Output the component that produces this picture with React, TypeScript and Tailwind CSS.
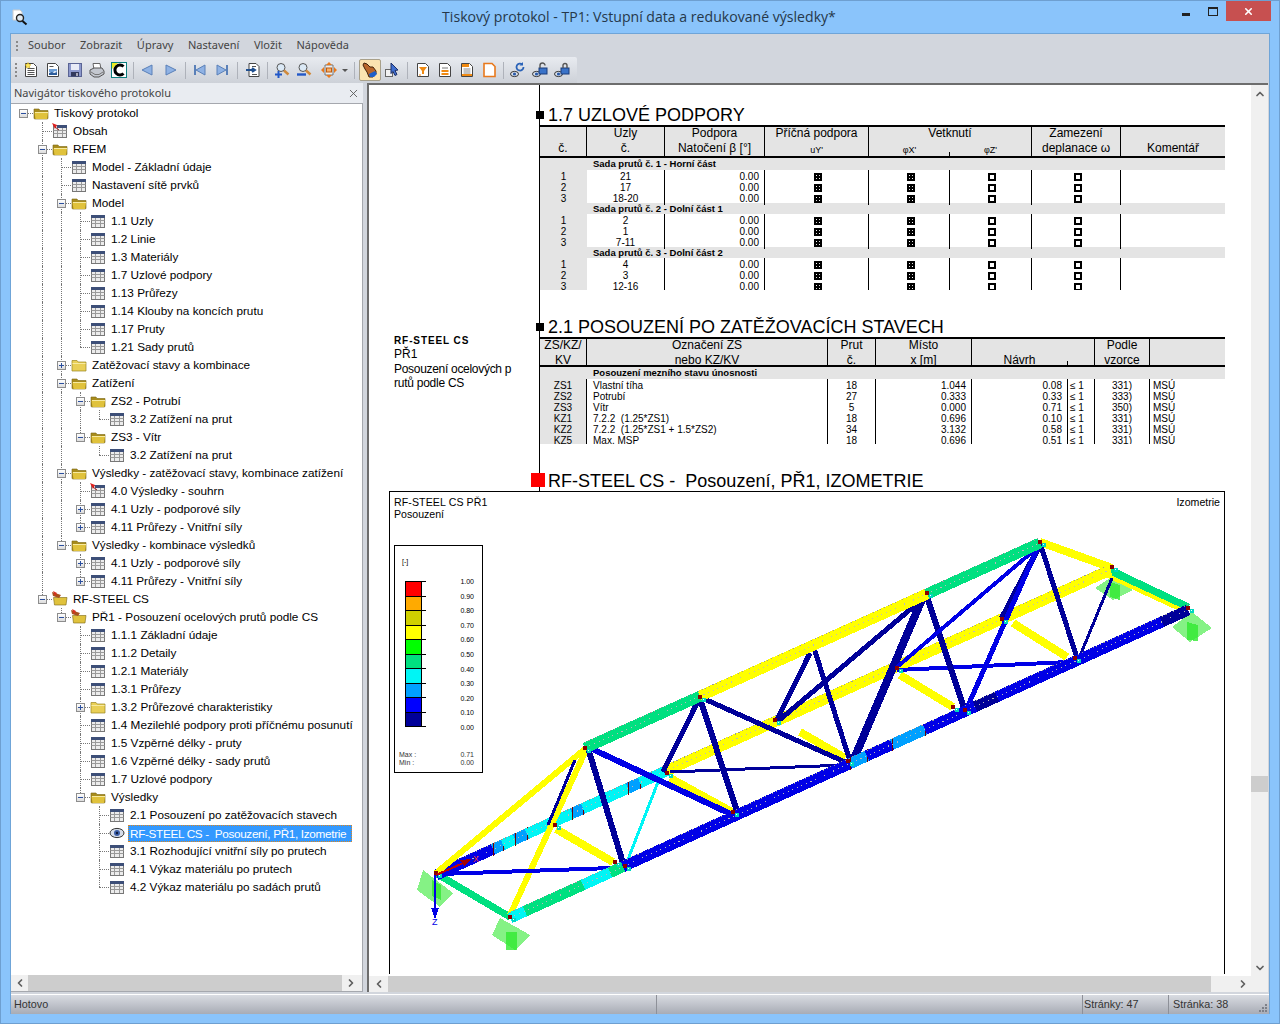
import React from "react";
import { ChevronLeft, ChevronRight, ChevronUp, ChevronDown, X } from "lucide-react";

const DocBase = () => <path d="M2.5 1.5h8l3 3v10h-11z" fill="#fff" stroke="#444" />;
const I = ({ children }: { children: React.ReactNode }) => (
  <svg width="16" height="16" viewBox="0 0 16 16" className="shrink-0">{children}</svg>
);
const Lines = ({ c = "#555" }: { c?: string }) => (
  <path d="M4.5 6.5h7M4.5 8.5h7M4.5 10.5h7M4.5 12.5h7" stroke={c} fill="none" />
);
const Eye = () => (
  <g>
    <ellipse cx="4.5" cy="12" rx="4" ry="2.6" fill="#dfe6f0" stroke="#333" />
    <circle cx="4.5" cy="12" r="1.6" fill="#2a5aa8" />
  </g>
);
const Mag = () => (
  <g>
    <circle cx="7" cy="5.5" r="4" fill="#dbe9f6" stroke="#555" />
    <path d="M10 8.5l4.5 4" stroke="#d08a3c" strokeWidth="2.4" fill="none" />
  </g>
);
const Tools: Record<string, React.ReactNode> = {
  nw: (<><DocBase /><Lines /><path d="M5 .5l1 2 2 .2-1.6 1.3.5 2.1L5 5l-1.9 1.1.5-2.1L2 2.7l2-.2z" fill="#ffe95c" stroke="#c9a200" strokeWidth=".5" /></>),
  op: (<><DocBase /><path d="M4 7h8v3l-2-1-3 2-3-1z" fill="#6e9fd6" /><path d="M4 11l3-1 2 1 3-1v3H4z" fill="#2c5d9c" /><path d="M4.5 4.5h4" stroke="#555" /></>),
  sv: (<><rect x="1.5" y="1.5" width="13" height="13" fill="#8c98cc" stroke="#5a6494" /><rect x="4" y="2" width="8" height="6" fill="#e8ebf6" /><rect x="4" y="10" width="8" height="4.5" fill="#333a5c" /><rect x="9" y="11" width="2" height="3" fill="#aab" /></>),
  pr: (<><path d="M4 1.5h7l1 6H5z" fill="#fff" stroke="#666" /><path d="M1 8l4-2h8l2 3v3l-5 3H5l-4-3z" fill="#c4c8d0" stroke="#555" /><path d="M2 10l4 2.5h4l4-2.5" stroke="#777" fill="none" /></>),
  cl: (<><rect x=".5" y=".5" width="15" height="15" fill="#fff" stroke="#0d7f7f" /><path d="M1 1h6L1 7z" fill="#ecec20" /><path d="M12.5 4.5A5 5 0 1 0 12.5 11.5" stroke="#000" strokeWidth="3" fill="none" /></>),
  al: (<path d="M2 8l10-5v10z" fill="#8fb2e4" stroke="#5a80b8" />),
  ar: (<path d="M14 8L4 3v10z" fill="#8fb2e4" stroke="#5a80b8" />),
  fs: (<><path d="M3 3v10" stroke="#5a80b8" strokeWidth="2" /><path d="M4 8l9-5v10z" fill="#8fb2e4" stroke="#5a80b8" /></>),
  ls: (<><path d="M13 3v10" stroke="#5a80b8" strokeWidth="2" /><path d="M12 8L3 3v10z" fill="#8fb2e4" stroke="#5a80b8" /></>),
  ex: (<><path d="M4 1.5h7l3 3v10H4z" fill="#fff" stroke="#444" /><path d="M7 4.5h4M7 12.5h5" stroke="#555" /><path d="M1 8h8M7 6l3 2-3 2" stroke="#1f4f8f" strokeWidth="2" fill="none" /></>),
  zi: (<><Mag /><path d="M1 12.5h7M4.5 9v7" stroke="#2258c8" strokeWidth="2" /></>),
  zo: (<><Mag /><path d="M1 12.5h9" stroke="#2258c8" strokeWidth="2.4" /></>),
  st: (<><path d="M4 3h8v10H4z" fill="#eee" stroke="#777" /><path d="M8 0l3 3H5zM8 16l3-3H5zM0 8l3-3v6zM16 8l-3-3v6z" fill="#e8791c" /><rect x="5.5" y="6" width="5" height="4" fill="#f6b26b" stroke="#c05a10" /></>),
  hd: (<><path d="M2 1l3 1 3 3 3 0 3 4v3l-3 3H7L5 10 3 7 1 3z" fill="#b9662b" stroke="#442208" /><path d="M7 12l6-3 2 3-3 3H8z" fill="#1e5fc8" /></>),
  cs: (<><rect x="1.5" y="7.5" width="7" height="7" fill="#f2f2f2" stroke="#666" /><path d="M7 1l7 7-3 .5 2 4-2 1-2-4-2 2z" fill="#3f6fd0" stroke="#1d2f66" /></>),
  ff: (<><DocBase /><path d="M4 5h8L9 9v3H7V9z" fill="#f08a12" /><path d="M4 13h2" stroke="#f08a12" /></>),
  fl: (<><DocBase /><path d="M5 6h6" stroke="#777" /><rect x="4.5" y="8" width="7" height="2" fill="#f08a12" /><rect x="4.5" y="11" width="7" height="2" fill="#f08a12" /></>),
  fh: (<><DocBase /><rect x="3" y="2" width="7" height="3" fill="#f08a12" /><path d="M4.5 7h7M4.5 9h7M4.5 11h7" stroke="#888" /><rect x="3" y="12" width="10" height="2" fill="#f08a12" /></>),
  fo: (<path d="M3 1.5h8l3 3v10H3z" fill="#fff" stroke="#e8791c" strokeWidth="1.6" />),
  es: (<><Eye /><path d="M13.5 5a3.5 3.5 0 1 1-1.2-2.6" stroke="#2a63b8" strokeWidth="1.8" fill="none" /><path d="M13 0v3.5H9.5" fill="#2a63b8" /></>),
  eu: (<><Eye /><rect x="7" y="6" width="8" height="6" fill="#3a73c8" stroke="#1b3d7a" /><path d="M8 6V3.5a2.5 2.5 0 0 1 5 0" stroke="#555" strokeWidth="1.4" fill="none" /></>),
  el: (<><Eye /><rect x="7" y="6" width="8" height="6" fill="#3a73c8" stroke="#1b3d7a" /><path d="M9 6V3.5a2 2 0 0 1 4 0V6" stroke="#555" strokeWidth="1.4" fill="none" /></>),
};

const T = ({ n }: { n: string }) => (
  <div className="flex h-[22px] w-[22px] items-center justify-center">
    <I>{Tools[n]}</I>
  </div>
);
const Sep = ({ w }: { w: string }) => (
  <div className={`flex justify-center ${w}`}>
    <div className="h-[17px] w-px bg-[#aeb2ba]" />
  </div>
);

const TableIcon = () => (
  <I>
    <rect x="1.5" y="2.5" width="13" height="12" fill="#ececec" stroke="#777" />
    <rect x="1" y="2" width="14" height="3" fill="#3d4f78" />
    <path d="M1.5 7.5h13M1.5 10.5h13M5.5 5v9M10.5 5v9" stroke="#9a9a9a" />
  </I>
);
const PinIcon = () => (
  <I>
    <rect x="1.5" y="2.5" width="13" height="12" fill="#ececec" stroke="#777" />
    <rect x="5" y="2" width="10" height="3" fill="#3d4f78" />
    <path d="M1.5 7.5h13M1.5 10.5h13M5.5 5v9M10.5 5v9" stroke="#9a9a9a" />
    <path d="M0 0l5 2-2 4z" fill="#e02020" />
    <path d="M3 4l4 3" stroke="#a02020" />
  </I>
);
const FolderIcon = () => (
  <I>
    <path d="M1 4h5l1 1.5h8V13a1 1 0 0 1-1 1H2a1 1 0 0 1-1-1z" fill="#a88c1c" stroke="#7a6714" strokeWidth=".6" />
    <path d="M1.5 7.5h13.5l-1 6.5H2.5z" fill="#e0c23c" />
    <path d="M2 7.5h13" stroke="#f7eaa0" />
  </I>
);
const ClosedFolderIcon = () => (
  <I>
    <path d="M1 3.5h5l1.2 1.5H15v9H1z" fill="#e9cf56" stroke="#9a8420" strokeWidth=".7" />
    <path d="M1.5 6.5h13" stroke="#f7eaa0" />
  </I>
);
const SteelIcon = () => (
  <I>
    <path d="M1.5 6.5h13.5l-1 7.5H2.5z" fill="#e0c23c" stroke="#7a6714" strokeWidth=".6" />
    <path d="M0 1l9 3-2 3L1 5z" fill="#a8501c" />
    <path d="M1 0l4 2-2 3z" fill="#d83020" />
  </I>
);
const EyeIcon = () => (
  <I>
    <ellipse cx="8" cy="8" rx="7" ry="4.6" fill="#d5dce8" stroke="#333" />
    <circle cx="8" cy="8" r="3" fill="#3d5fa8" />
    <circle cx="8" cy="8" r="1.2" fill="#0c1a3a" />
  </I>
);
const icons: Record<string, React.ReactNode> = {
  t: <TableIcon />, p: <PinIcon />, f: <FolderIcon />, c: <ClosedFolderIcon />, s: <SteelIcon />, e: <EyeIcon />,
};

type N = { l: string; i: string; k?: N[]; closed?: boolean; sel?: boolean };
const t = (l: string): N => ({ l, i: "t" });
const tree: N = {
  l: "Tiskový protokol", i: "f", k: [
    { l: "Obsah", i: "p" },
    { l: "RFEM", i: "f", k: [
      t("Model - Základní údaje"),
      t("Nastavení sítě prvků"),
      { l: "Model", i: "f", k: [
        t("1.1 Uzly"), t("1.2 Linie"), t("1.3 Materiály"), t("1.7 Uzlové podpory"), t("1.13 Průřezy"),
        t("1.14 Klouby na koncích prutu"), t("1.17 Pruty"), t("1.21 Sady prutů"),
      ] },
      { l: "Zatěžovací stavy a kombinace", i: "c", closed: true, k: [] },
      { l: "Zatížení", i: "f", k: [
        { l: "ZS2 - Potrubí", i: "f", k: [t("3.2 Zatížení na prut")] },
        { l: "ZS3 - Vítr", i: "f", k: [t("3.2 Zatížení na prut")] },
      ] },
      { l: "Výsledky - zatěžovací stavy, kombinace zatížení", i: "f", k: [
        { l: "4.0 Výsledky - souhrn", i: "p" },
        { l: "4.1 Uzly - podporové síly", i: "t", closed: true, k: [] },
        { l: "4.11 Průřezy - Vnitřní síly", i: "t", closed: true, k: [] },
      ] },
      { l: "Výsledky - kombinace výsledků", i: "f", k: [
        { l: "4.1 Uzly - podporové síly", i: "t", closed: true, k: [] },
        { l: "4.11 Průřezy - Vnitřní síly", i: "t", closed: true, k: [] },
      ] },
    ] },
    { l: "RF-STEEL CS", i: "s", k: [
      { l: "PŘ1 - Posouzení ocelových prutů podle CS", i: "s", k: [
        t("1.1.1 Základní údaje"), t("1.1.2 Detaily"), t("1.2.1 Materiály"), t("1.3.1 Průřezy"),
        { l: "1.3.2 Průřezové charakteristiky", i: "c", closed: true, k: [] },
        t("1.4 Mezilehlé podpory proti příčnému posunutí"), t("1.5 Vzpěrné délky - pruty"),
        t("1.6 Vzpěrné délky - sady prutů"), t("1.7 Uzlové podpory"),
        { l: "Výsledky", i: "f", k: [
          t("2.1 Posouzení po zatěžovacích stavech"),
          { l: "RF-STEEL CS -  Posouzení, PŘ1, Izometrie", i: "e", sel: true },
          t("3.1 Rozhodující vnitřní síly po prutech"),
          t("4.1 Výkaz materiálu po prutech"),
          t("4.2 Výkaz materiálu po sadách prutů"),
        ] },
      ] },
    ] },
  ],
};

type Row = { n: N; guides: boolean[]; last: boolean; root: boolean };
const rows: Row[] = [];
const walk = (n: N, guides: boolean[], last: boolean, root: boolean) => {
  rows.push({ n, guides, last, root });
  (n.closed ? [] : n.k ?? []).forEach((c, i, a) => walk(c, [...guides, !last], i === a.length - 1, false));
};
walk(tree, [], true, true);

const TreeRow = ({ r }: { r: Row }) => (
  <div className="flex h-[18px] items-center">
    {r.guides.map((g, i) => (
      <div key={i} className="relative h-full w-[19px] shrink-0">
        {g && <div className="absolute bottom-0 left-[9px] top-0 border-l border-dotted border-[#777]" />}
      </div>
    ))}
    <div className="relative h-full w-[19px] shrink-0">
      {!r.root && <div className={`absolute left-[9px] top-0 border-l border-dotted border-[#777] ${r.last ? "h-[9px]" : "h-[18px]"}`} />}
      <div className="absolute left-[9px] top-[9px] w-[10px] border-t border-dotted border-[#777]" />
      {r.n.k && (
        <div className="absolute left-[5px] top-[5px] flex h-[9px] w-[9px] items-center justify-center border border-[#8d8d8d] bg-gradient-to-b from-white to-[#dcdcdc]">
          <div className="h-px w-[5px] bg-[#2b4f9e]" />
          {r.n.closed && <div className="absolute h-[5px] w-px bg-[#2b4f9e]" />}
        </div>
      )}
    </div>
    {icons[r.n.i]}
    {r.n.sel ? (
      <span className="ml-[3px] whitespace-pre border border-dotted border-[#e0861c] bg-[#3399ff] pl-[1px] pr-[5px] leading-[15px] tracking-[-0.33px] text-white">{r.n.l}</span>
    ) : (
      <span className="ml-[5px] whitespace-pre text-black">{r.n.l}</span>
    )}
  </div>
);

const Check = ({ on }: { on: boolean }) =>
  on ? (
    <svg width="8" height="8" viewBox="0 0 8 8" className="block" shapeRendering="crispEdges">
      <rect width="8" height="8" fill="#000" />
      <rect x="2" y="2" width="1" height="1" fill="#fff" />
      <rect x="5" y="2" width="1" height="1" fill="#ddd" />
      <rect x="2" y="5" width="1" height="1" fill="#ddd" />
      <rect x="5" y="5" width="1" height="1" fill="#fff" />
    </svg>
  ) : (
    <div className="h-[8px] w-[8px] border-2 border-black bg-white" />
  );

const Sec = ({ children, red }: { children: React.ReactNode; red?: boolean }) => (
  <div className="relative h-[20px] whitespace-pre pl-[8px] text-[18px] leading-[20px] text-black">
    {red ? (
      <div className="absolute left-[-9px] top-[2px] h-[14px] w-[14px] bg-[#ff0000]" />
    ) : (
      <div className="absolute left-[-4px] top-[6px] h-[8px] w-[8px] bg-black" />
    )}
    {children}
  </div>
);

const g1 = "grid grid-cols-[47px_78px_100px_104px_81px_82px_89px_104px]";
const g2 = "grid grid-cols-[47px_241px_48px_96px_95px_28px_55px_75px]";

const H = ({ a, b, last, sub, s }: { a?: string; b?: React.ReactNode; last?: boolean; sub?: boolean; s?: boolean }) => (
  <div className={`flex flex-col items-center text-[12px] ${s ? "h-[26px]" : "h-[29px]"} ${last ? "" : "border-r border-black"}`}>
    <div className="h-[13px] whitespace-pre leading-[12px]">{a}</div>
    <div className={`h-[13px] whitespace-pre leading-[17px] ${sub ? "pt-[2px] text-[9px]" : ""}`}>{b}</div>
  </div>
);

const Band = ({ g, text, h }: { g: string; text: string; h: string }) => (
  <div className={`${g} ${h} bg-[#e4e4e4] text-[9.5px] font-bold leading-[11px]`}>
    <div />
    <div className="col-span-7 whitespace-pre pl-[6px]">{text}</div>
  </div>
);

const Rows1 = ({ data }: { data: [string, string][] }) => (
  <>
    {data.map(([a, b], i) => (
      <div key={i} className={`${g1} h-[11px] text-[10px] leading-[13px]`}>
        <div className="bg-[#e4e4e4] text-center">{a}</div>
        <div className="border-r border-black text-center">{b}</div>
        <div className="border-r border-black pr-[5px] text-right">0.00</div>
        {[true, true, false, false].map((on, k) => (
          <div key={k} className="flex items-center justify-center border-r border-black pl-[3px]">
            <Check on={on} />
          </div>
        ))}
        <div />
      </div>
    ))}
  </>
);

const rows2: string[][] = [
  ["ZS1", "Vlastní tíha", "18", "1.044", "0.08", "331)"],
  ["ZS2", "Potrubí", "27", "0.333", "0.33", "333)"],
  ["ZS3", "Vítr", "5", "0.000", "0.71", "350)"],
  ["KZ1", "7.2.2  (1.25*ZS1)", "18", "0.696", "0.10", "331)"],
  ["KZ2", "7.2.2  (1.25*ZS1 + 1.5*ZS2)", "34", "3.132", "0.58", "331)"],
  ["KZ5", "Max. MSP", "18", "0.696", "0.51", "331)"],
];

const Seg = ({ a, b, c, w }: { a: number[]; b: number[]; c: string; w: number }) => (
  <line x1={a[0]} y1={a[1]} x2={b[0]} y2={b[1]} stroke={c} strokeWidth={w} />
);
const navy = "#000099", blue = "#0000e6", yel = "#ffff00", grn = "#00e080", cy = "#00f5f5", lb = "#00a0ff";

const Chord = ({ x0, y0, x1, y1, w, stops }: { x0: number; y0: number; x1: number; y1: number; w: number; stops: [number, string][] }) => {
  const yAt = (x: number) => y0 + ((y1 - y0) * (x - x0)) / (x1 - x0);
  let prev = x0;
  return (
    <g>
      {stops.map(([x, c], i) => {
        const s = prev;
        prev = x;
        return (
          <g key={i}>
            <line x1={s} y1={yAt(s)} x2={x} y2={yAt(x)} stroke={c} strokeWidth={w} />
            {c === lb && <line x1={x} y1={yAt(x) - w / 2 - 1} x2={x} y2={yAt(x) + w / 2 + 1} stroke="#700000" strokeWidth="1" />}
            {c === lb && <line x1={s} y1={yAt(s) - w / 2 - 1} x2={s} y2={yAt(s) + w / 2 + 1} stroke="#700000" strokeWidth="1" />}
          </g>
        );
      })}
      <line x1={x0} y1={yAt(x0) - w / 2} x2={x1} y2={yAt(x1) - w / 2} stroke="#999" strokeWidth="1" strokeDasharray="1 3" />
      <line x1={x0} y1={yAt(x0)} x2={x1} y2={yAt(x1)} stroke="#bbb" strokeWidth="1" strokeDasharray="1 4" />
    </g>
  );
};
const Node = ({ x, y }: { x: number; y: number }) => (
  <g>
    <rect x={x + 2} y={y + 1} width="4" height="4" fill="#00d8c0" />
    <rect x={x + 3} y={y + 2} width="1" height="1" fill="#fff" />
    <rect x={x - 2} y={y - 2} width="4" height="4" fill="#8b0000" />
  </g>
);
const Support = ({ p, q }: { p: string; q: string }) => (
  <g>
    <polygon points={p} fill="#70f070" opacity=".85" />
    <polygon points={q} fill="#30e830" opacity=".8" />
  </g>
);

const Truss = () => (
  <svg width="834" height="483" viewBox="390 492 834 483" className="absolute left-0 top-0" shapeRendering="crispEdges">
    <Support p="423,870 453,893 440,907 417,890" q="432,880 441,885 441,900 432,896" />
    <Support p="500,918 530,935 515,950 492,935" q="506,932 517,932 517,950 506,950" />
    <Support p="1192,612 1212,628 1190,642 1172,627" q="1187,622 1198,625 1198,641 1187,640" />
    <Support p="1110,578 1133,590 1113,600 1095,588" q="1110,582 1120,585 1120,600 1110,597" />

    <Seg a={[437, 874]} b={[510, 917]} c={grn} w={7} />
    <Seg a={[1108, 570]} b={[1188, 608]} c={grn} w={9} />
    <Seg a={[1106, 575]} b={[1188, 613]} c={yel} w={4} />
    <Seg a={[1040, 542]} b={[1112, 568]} c={yel} w={8} />
    <Chord x0={436} y0={875} x1={1110} y1={570} w={11} stops={[[493, blue], [503, lb], [515, cy], [527, lb], [572, cy], [583, lb], [628, cy], [640, lb], [667, cy], [1110, yel]]} />
    <Seg a={[556, 829]} b={[613, 862]} c={yel} w={8} />
    <Seg a={[670, 778]} b={[732, 812]} c={yel} w={8} />
    <Seg a={[800, 732]} b={[845, 758]} c={yel} w={8} />
    <Seg a={[900, 675]} b={[953, 707]} c={yel} w={8} />
    <Seg a={[1013, 623]} b={[1067, 657]} c={yel} w={8} />
    <Seg a={[436, 873]} b={[585, 749]} c={yel} w={6} />
    <Seg a={[510, 915]} b={[586, 750]} c={yel} w={6} />
    <Seg a={[658, 782]} b={[627, 862]} c={cy} w={3} />
    <Seg a={[575, 760]} b={[548, 825]} c={navy} w={3} />
    <Seg a={[588, 748]} b={[623, 863]} c={navy} w={6} />
    <Seg a={[440, 874]} b={[612, 868]} c={blue} w={4} />
    <Seg a={[670, 772]} b={[845, 765]} c={navy} w={3} />
    <Seg a={[897, 670]} b={[1069, 662]} c={blue} w={4} />
    <Seg a={[588, 747]} b={[735, 816]} c={blue} w={6} />
    <Seg a={[700, 697]} b={[845, 762]} c={navy} w={5} />
    <Seg a={[697, 703]} b={[663, 772]} c={navy} w={5} />
    <Seg a={[700, 699]} b={[738, 814]} c={navy} w={6} />
    <Seg a={[813, 645]} b={[850, 761]} c={navy} w={5} />
    <Seg a={[810, 653]} b={[777, 720]} c={navy} w={5} />
    <Seg a={[919, 602]} b={[777, 722]} c={navy} w={5} />
    <Seg a={[923, 597]} b={[853, 761]} c={navy} w={8} />
    <Seg a={[927, 597]} b={[964, 708]} c={navy} w={6} />
    <Seg a={[1038, 547]} b={[897, 667]} c={blue} w={4} />
    <Seg a={[1040, 545]} b={[1002, 618]} c={navy} w={6} />
    <Seg a={[1038, 547]} b={[967, 708]} c={blue} w={5} />
    <Seg a={[1040, 543]} b={[1077, 658]} c={navy} w={5} />
    <Seg a={[1112, 578]} b={[1080, 656]} c={navy} w={3} />

    <Chord x0={510} y0={918} x1={1188} y1={610} w={11} stops={[[525, cy], [583, grn], [610, cy], [623, grn], [850, blue], [867, lb], [892, blue], [925, lb], [975, blue], [997, navy], [1162, blue], [1188, navy]]} />
    <Chord x0={585} y0={748} x1={1040} y1={543} w={11} stops={[[700, grn], [927, yel], [1040, grn]]} />

    <Node x={436} y={873} /><Node x={510} y={917} /><Node x={585} y={748} /><Node x={700} y={697} />
    <Node x={927} y={593} /><Node x={1040} y={542} /><Node x={667} y={773} /><Node x={775} y={720} />
    <Node x={897} y={668} /><Node x={1002} y={619} /><Node x={1112} y={567} /><Node x={1188} y={608} />
    <Node x={555} y={825} /><Node x={615} y={862} /><Node x={625} y={866} /><Node x={733} y={812} />
    <Node x={848} y={761} /><Node x={953} y={707} /><Node x={965} y={710} /><Node x={1075} y={658} />

    <Seg a={[435, 875]} b={[435, 912]} c={blue} w={2} />
    <polygon points="431,908 439,908 435,919" fill="#0000e6" />
    <text x="432" y="925" fontSize="9" fill="#0000e6">Z</text>
    <Seg a={[436, 875]} b={[468, 861]} c="#c00000" w={2} />
    <polygon points="460,860 471,859 464,866" fill="#a00000" />
    <text x="473" y="862" fontSize="9" fill="#e03030">X</text>
  </svg>
);

const legend = ["#ff0000", "#ffaa00", "#d0d000", "#ffff00", "#00ff00", "#00e080", "#00f5f5", "#00a0ff", "#0000ff", "#000099"];
const values = ["1.00", "0.90", "0.80", "0.70", "0.60", "0.50", "0.40", "0.30", "0.20", "0.10", "0.00"];

const ui = "font-['Liberation_Sans',sans-serif]";

export default function App() {
  return (
    <div className={`flex h-[1024px] w-[1280px] flex-col overflow-hidden border border-[#6e9fd0] bg-[#8ac4fb] ${ui} text-[12px]`}>
      <div className="relative flex h-[32px] items-center justify-center font-['Open_Sans',sans-serif] text-[14.1px] text-[#26384a]">
        <div className="absolute left-[9px] top-[8px]">
          <svg width="20" height="17" viewBox="0 0 20 17">
            <path d="M3 1h7l2 2v8H3z" fill="#fff" stroke="#ccc" />
            <circle cx="10" cy="9" r="3.5" fill="#dfe9f2" stroke="#222" strokeWidth="1.4" />
            <path d="M12.5 12l4 3.5" stroke="#111" strokeWidth="2" />
          </svg>
        </div>
        <span className="pr-[2px]">Tiskový protokol - TP1: Vstupní data a redukované výsledky*</span>
        <div className="absolute left-[1181px] top-[12px] h-[3px] w-[8px] bg-[#222]" />
        <div className="absolute left-[1207px] top-[6px] h-[9px] w-[10px] border border-t-2 border-[#222]" />
        <div className="absolute left-[1225px] top-0 flex h-[20px] w-[45px] items-center justify-center bg-[#c75050] text-white">
          <X size={11} strokeWidth={3.5} />
        </div>
      </div>

      <div className="mx-[9px] flex min-h-0 flex-1 flex-col border border-b-0 border-[#6fa5d8] bg-[#d2d6dd]">
        <div className="flex h-[23px] items-center font-['Noto_Sans',sans-serif] text-[11px] text-[#444]">
          <div className="ml-[5px] mr-[10px] h-[10px] border-l-2 border-dotted border-[#8a8a8a]" />
          <div className="flex gap-[14.6px]">
            {["Soubor", "Zobrazit", "Úpravy", "Nastavení", "Vložit", "Nápověda"].map((m) => (
              <span key={m}>{m}</span>
            ))}
          </div>
        </div>

        <div className="flex h-[26px]">
          <div className="flex w-[566px] items-center rounded-tr-[2px] bg-gradient-to-b from-[#e8ebf0] to-[#cdd1d8]">
            <div className="flex w-[9px] justify-center"><div className="h-[14px] border-l-2 border-dotted border-[#8a8a8a]" /></div>
            <T n="nw" /><T n="op" /><T n="sv" /><T n="pr" /><T n="cl" />
            <Sep w="w-[7px]" />
            <T n="al" /><T n="ar" />
            <Sep w="w-[8px]" />
            <T n="fs" /><T n="ls" />
            <Sep w="w-[9px]" />
            <T n="ex" />
            <Sep w="w-[7px]" />
            <T n="zi" /><T n="zo" />
            <div className="w-[3px]" />
            <T n="st" />
            <div className="flex w-[10px] justify-center">
              <div className="h-0 w-0 border-x-[3px] border-t-[3px] border-x-transparent border-t-[#555]" />
            </div>
            <Sep w="w-[9px]" />
            <div className="flex h-[22px] w-[22px] items-center justify-center rounded-[2px] border border-[#a8a08a] bg-[#fbe3b0]">
              <I>{Tools.hd}</I>
            </div>
            <T n="cs" />
            <Sep w="w-[9px]" />
            <T n="ff" /><T n="fl" /><T n="fh" /><T n="fo" />
            <Sep w="w-[7px]" />
            <T n="es" /><T n="eu" /><T n="el" />
          </div>
        </div>

        <div className="flex min-h-0 flex-1 pb-[2px]">
          <div className="flex w-[352px] flex-col">
            <div className="flex h-[20px] items-center justify-between bg-[#e9ecf1] pl-[3px] pr-[3px] font-['Noto_Sans',sans-serif] text-[11px] text-[#444]">
              <span>Navigátor tiskového protokolu</span>
              <X size={13} strokeWidth={1.6} className="text-[#555]" />
            </div>
            <div className="flex min-h-0 flex-1 flex-col border-y border-r border-[#a5a8ae] bg-white">
              <div className="min-h-0 flex-1 overflow-hidden pl-[3px] text-[11.75px]">
                {rows.map((r, i) => <TreeRow key={i} r={r} />)}
              </div>
              <div className="flex h-[16px] items-center bg-[#f0f0f0] text-[#606060]">
                <div className="flex w-[17px] justify-center"><ChevronLeft size={12} strokeWidth={3.5} /></div>
                <div className="h-full w-[314px] bg-[#cdcdcd]" />
                <div className="flex w-[17px] justify-center"><ChevronRight size={12} strokeWidth={3.5} /></div>
              </div>
            </div>
          </div>

          <div className="ml-[4px] mr-[1px] flex min-w-0 flex-1 flex-col border-l-2 border-t-2 border-[#6d6d6d]">
            <div className="flex min-h-0 flex-1">
              <div className="min-w-0 flex-1 overflow-hidden bg-white text-black">
                <div className="flex">
                  <div className="w-[170px] shrink-0 whitespace-pre pl-[25px] pt-[248px] text-[12px] leading-[14.5px]">
                    <div className="mt-[1px] h-[13px] text-[10px] font-bold tracking-[0.9px]">RF-STEEL CS</div>
                    <div>PŘ1</div>
                    <div className="tracking-[-0.3px]">Posouzení ocelových p</div>
                    <div className="tracking-[-0.25px]">rutů podle CS</div>
                  </div>
                  <div className="w-[686px] border-l border-black pt-[20px]">
                    <Sec>1.7 UZLOVÉ PODPORY</Sec>
                    <div className="h-[165px] overflow-hidden">
                      <div className={`${g1} border-y-2 border-black bg-[#e4e4e4]`}>
                        <H b="č." />
                        <H a="Uzly" b="č." />
                        <H a="Podpora" b="Natočení β [°]" />
                        <H a="Příčná podpora" b="uY'" sub />
                        <div className="col-span-2 flex h-[29px] flex-col border-r border-black text-[12px]">
                          <div className="h-[13px] text-center leading-[12px]">Vetknutí</div>
                          <div className="grid h-[16px] grid-cols-2 pt-[2px] text-center text-[9px] leading-[16px]">
                            <div className="relative">φX'<div className="absolute bottom-0 right-0 h-[6px] w-px bg-black" /></div>
                            <div>φZ'</div>
                          </div>
                        </div>
                        <H a="Zamezení" b="deplanace ω" />
                        <H b="Komentář" last />
                      </div>
                      <Band g={g1} text="Sada prutů č. 1 - Horní část" h="h-[12px]" />
                      <Rows1 data={[["1", "21"], ["2", "17"], ["3", "18-20"]]} />
                      <Band g={g1} text="Sada prutů č. 2 - Dolní část 1" h="h-[11px]" />
                      <Rows1 data={[["1", "2"], ["2", "1"], ["3", "7-11"]]} />
                      <Band g={g1} text="Sada prutů č. 3 - Dolní část 2" h="h-[11px]" />
                      <Rows1 data={[["1", "4"], ["2", "3"], ["3", "12-16"]]} />
                    </div>
                    <div className="h-[27px]" />
                    <Sec>2.1 POSOUZENÍ PO ZATĚŽOVACÍCH STAVECH</Sec>
                    <div className="h-[107px] overflow-hidden">
                      <div className={`${g2} border-y-2 border-black bg-[#e4e4e4]`}>
                        <H s a="ZS/KZ/" b="KV" />
                        <H s a="Označení ZS" b="nebo KZ/KV" />
                        <H s a="Prut" b="č." />
                        <H s a="Místo" b="x [m]" />
                        <div className="relative col-span-2 h-[26px] border-r border-black text-[12px] leading-[16px]">
                          <div className="w-[95px] pt-[13px] text-center">Návrh</div>
                          <div className="absolute bottom-0 left-[95px] h-[4px] w-px bg-black" />
                        </div>
                        <H s a="Podle" b="vzorce" />
                        <H s last />
                      </div>
                      <Band g={g2} text="Posouzení mezního stavu únosnosti" h="h-[12px]" />
                      {rows2.map((r) => (
                        <div key={r[0]} className={`${g2} h-[11px] text-[10px] leading-[13px]`}>
                          <div className="border-r border-black bg-[#e4e4e4] text-center">{r[0]}</div>
                          <div className="whitespace-pre border-r border-black pl-[6px]">{r[1]}</div>
                          <div className="border-r border-black text-center">{r[2]}</div>
                          <div className="border-r border-black pr-[5px] text-right">{r[3]}</div>
                          <div className="pr-[5px] text-right">{r[4]}</div>
                          <div className="whitespace-pre border-x border-black pl-[2px]">≤ 1</div>
                          <div className="border-r border-black text-center">{r[5]}</div>
                          <div className="pl-[3px]">MSÚ</div>
                        </div>
                      ))}
                    </div>
                    <div className="h-[27px]" />
                    <Sec red>RF-STEEL CS -  Posouzení, PŘ1, IZOMETRIE</Sec>
                  </div>
                </div>
                <div className="relative ml-[20px] h-[483px] w-[836px] border-x border-t border-black">
                  <div className="flex justify-between px-[4px] pt-[4px] text-[10.6px] leading-[12px]">
                    <div>
                      <div className="tracking-[0.1px]">RF-STEEL CS PŘ1</div>
                      <div>Posouzení</div>
                    </div>
                    <div>Izometrie</div>
                  </div>
                  <Truss />
                  <div className="absolute left-[4px] top-[53px] flex h-[228px] w-[89px] flex-col border border-black bg-white pl-[10px] pr-[8px] pt-[11px] text-[7px] leading-[9px]">
                    <div className="-ml-[3px] h-[24px]">[-]</div>
                    <div className="flex h-[148px]">
                      <div className="flex h-[146px] w-[17px] flex-col border-x border-b border-black">
                        {legend.map((c) => (
                          <div key={c} className="flex-1 border-t border-black" style={{ backgroundColor: c }} />
                        ))}
                      </div>
                      <div className="flex h-[146px] w-[4px] flex-col justify-between">
                        {values.map((v) => <div key={v} className="h-px bg-black" />)}
                      </div>
                      <div className="-my-[4px] flex h-[155px] flex-1 flex-col items-end justify-between">
                        {values.map((v) => <div key={v}>{v}</div>)}
                      </div>
                    </div>
                    <div className="-ml-[6px] mt-[22px] flex justify-between leading-[8px] text-[#333]">
                      <div>Max :<br />Min :</div>
                      <div>0.71<br />0.00</div>
                    </div>
                  </div>
                </div>
              </div>
              <div className="flex w-[17px] flex-col items-center bg-[#f0f0f0] text-[#606060]">
                <div className="flex h-[17px] items-center"><ChevronUp size={12} strokeWidth={3.5} /></div>
                <div className="mt-[674px] h-[16px] w-full bg-[#cdcdcd]" />
                <div className="flex-1" />
                <div className="flex h-[17px] items-center"><ChevronDown size={12} strokeWidth={3.5} /></div>
              </div>
            </div>
            <div className="flex h-[16px] items-center bg-[#f0f0f0] text-[#606060]">
              <div className="flex w-[19px] justify-center"><ChevronLeft size={12} strokeWidth={3.5} /></div>
              <div className="h-full w-[823px] bg-[#cdcdcd]" />
              <div className="flex w-[40px] justify-end pr-[2px]"><ChevronRight size={12} strokeWidth={3.5} /></div>
            </div>
          </div>
        </div>

        <div className="relative flex h-[20px] items-center border-t border-white bg-gradient-to-b from-[#d9dce2] to-[#a8acb5] text-[10.8px] text-[#333]">
          <div className="w-[645px] pl-[3px]">Hotovo</div>
          <div className="h-full w-[426px] border-l border-[#8d9098]" />
          <div className="flex h-full w-[86px] items-center border-l border-[#8d9098] pl-[1px]">Stránky: 47</div>
          <div className="flex h-full flex-1 items-center border-l border-[#8d9098] pl-[4px]">Stránka: 38</div>
          <div className="absolute bottom-[2px] right-[2px] grid grid-cols-3 gap-px">
            {[0, 0, 1, 0, 1, 1, 1, 1, 1].map((d, i) => (
              <div key={i} className={`h-[2px] w-[2px] ${d ? "bg-[#7d8088]" : ""}`} />
            ))}
          </div>
        </div>
      </div>
      <div className="h-[9px]" />
    </div>
  );
}
